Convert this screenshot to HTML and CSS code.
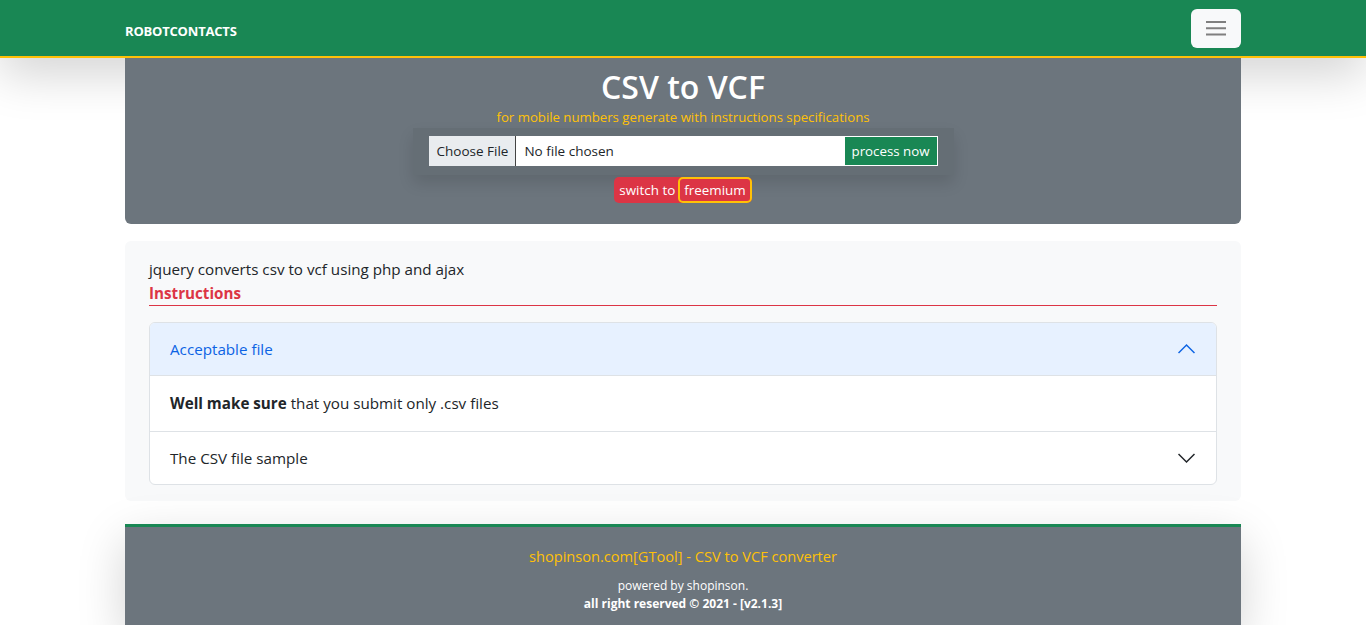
FILE: index.html
```html
<!DOCTYPE html>
<html lang="en">
<head>
  <meta charset="UTF-8">
  <meta name="viewport" content="width=device-width, initial-scale=1.0">
  <title>CSV to VCF - RobotContacts</title>
  <link rel="stylesheet" href="styles.css">
</head>
<body>
  <nav class="topbar">
    <div class="container topbar-inner">
      <a class="brand" href="#">ROBOTCONTACTS</a>
      <button class="toggler" type="button" aria-label="menu">
        <svg width="20" height="16" viewBox="0 0 20 16">
          <path d="M0 2h20M0 8.3h20M0 14.6h20" stroke="#7f7f7f" stroke-width="2" fill="none"/>
        </svg>
      </button>
    </div>
  </nav>

  <main class="container">
    <section class="hero">
      <h1>CSV to VCF</h1>
      <p class="hero-sub">for mobile numbers generate with instructions specifications</p>
      <form class="upload" onsubmit="return false">
        <div class="upload-group">
          <label class="file-btn">Choose File</label>
          <span class="file-name">No file chosen</span>
          <button class="process" type="submit">process now</button>
        </div>
      </form>
      <div class="plan-row">
        <span class="plan-badge">switch to <span class="plan-pill">freemium</span></span>
      </div>
    </section>

    <section class="info">
      <p class="lead-line">jquery converts csv to vcf using php and ajax</p>
      <h3 class="info-title">Instructions</h3>

      <div class="accordion">
        <div class="acc-item">
          <div class="acc-head open">
            <span>Acceptable file</span>
            <svg width="17" height="16" viewBox="0 0 17 16"><path d="M0.5 12l8-8 8 8" stroke="#0c63e4" stroke-width="1.5" fill="none"/></svg>
          </div>
          <div class="acc-body"><b>Well make sure</b> that you submit only .csv files</div>
        </div>
        <div class="acc-item">
          <div class="acc-head">
            <span>The CSV file sample</span>
            <svg width="17" height="16" viewBox="0 0 17 16"><path d="M0.5 4l8 8 8-8" stroke="#212529" stroke-width="1.5" fill="none"/></svg>
          </div>
        </div>
      </div>
    </section>
  </main>

  <footer class="container footer">
    <p class="footer-title">shopinson.com[GTool] - CSV to VCF converter</p>
    <p class="footer-small">powered by shopinson.</p>
    <p class="footer-small"><b>all right reserved © 2021 - [v2.1.3]</b></p>
  </footer>
</body>
</html>
```

FILE: styles.css
```css
body {
  margin: 0;
  font-family: "Open Sans", "Noto Sans", sans-serif;
  font-size: 15.2px;
  color: #212529;
  background-color: #fff;
}
.container {
  width: 1116px;
  margin: 0 auto;
  box-sizing: border-box;
}
.topbar {
  background-color: #198754;
  border-bottom: 2px solid #ffc107;
  box-shadow: 0 1rem 3rem rgba(0, 0, 0, 0.175);
  position: relative;
}
.topbar-inner {
  height: 56px;
  display: flex;
  align-items: center;
  justify-content: space-between;
}
.brand {
  color: #fff;
  font-weight: 700;
  font-size: 13px;
  text-decoration: none;
  letter-spacing: -0.2px;
  margin-top: 6px;
}
.toggler {
  width: 50px;
  height: 39px;
  background-color: #f8f9fa;
  border: none;
  border-radius: 6px;
  display: flex;
  align-items: center;
  justify-content: center;
  padding: 0;
}
.hero {
  position: relative;
  background-color: #6c757d;
  border-radius: 0 0 6px 6px;
  padding: 8px 0 21px;
  text-align: center;
  color: #fff;
}
.hero h1 {
  margin: 0;
  font-size: 32px;
  font-weight: 600;
  line-height: 42px;
}
.hero-sub {
  margin: 0 0 1px;
  color: #ffc107;
  font-size: 13.2px;
  line-height: 19px;
}
.upload {
  width: 541px;
  margin: 0 auto;
  padding: 8px 16px 9px;
  box-sizing: border-box;
  background-color: rgba(0, 0, 0, 0.06);
  box-shadow: 0 0.5rem 1rem rgba(0, 0, 0, 0.12);
}
.upload-group {
  display: flex;
  height: 30px;
  background-color: #fff;
  font-size: 13.5px;
  text-align: left;
}
.file-btn {
  background-color: #e9ecef;
  color: #212529;
  padding: 0 7px 0 8px;
  line-height: 30px;
  border-right: 1px solid #444;
}
.file-name {
  flex: 1;
  color: #212529;
  padding-left: 8px;
  line-height: 30px;
}
.process {
  background-color: #198754;
  color: #fff;
  border: 1px solid #fff;
  font-family: inherit;
  font-size: 13.3px;
  padding: 0 7px;
  cursor: pointer;
}
.plan-row {
  display: flex;
  justify-content: center;
  margin-top: 2px;
}
.plan-badge {
  display: flex;
  align-items: center;
  gap: 3px;
  height: 26px;
  padding: 0 0 0 5px;
  background-color: #dc3545;
  border-radius: 5px;
  font-size: 13.4px;
}
.plan-pill {
  border: 2px solid #ffc107;
  border-radius: 5px;
  padding: 0 4px;
  line-height: 22px;
}
.info {
  background-color: #f8f9fa;
  border-radius: 6px;
  margin-top: 17px;
  padding: 16px 24px 16px;
}
.lead-line {
  margin: 0;
  line-height: 24px;
}
.info-title {
  margin: 0 0 16px;
  color: #dc3545;
  font-size: 15.2px;
  font-weight: 700;
  line-height: 24px;
  border-bottom: 1px solid #dc3545;
}
.accordion {
  background-color: #fff;
  border: 1px solid #dee2e6;
  border-radius: 6px;
  overflow: hidden;
}
.acc-item + .acc-item {
  border-top: 1px solid #dee2e6;
}
.acc-head {
  display: flex;
  align-items: center;
  justify-content: space-between;
  padding: 0 21px 0 20px;
  height: 52px;
}
.acc-head.open {
  background-color: #e7f1ff;
  color: #0c63e4;
  border-bottom: 1px solid #dee2e6;
}
.acc-body {
  padding: 0 20px;
  height: 55px;
  line-height: 55px;
}
.footer {
  margin-top: 23px;
  background-color: #6c757d;
  border-top: 3px solid #198754;
  box-shadow: 0 1rem 3rem rgba(0, 0, 0, 0.175);
  text-align: center;
  padding: 17px 0 12px;
  color: #fff;
}
.footer-title {
  margin: 0 0 9px;
  color: #ffc107;
  font-size: 14.6px;
  line-height: 24px;
}
.footer-small {
  margin: 0;
  font-size: 12px;
  line-height: 18px;
}
```
